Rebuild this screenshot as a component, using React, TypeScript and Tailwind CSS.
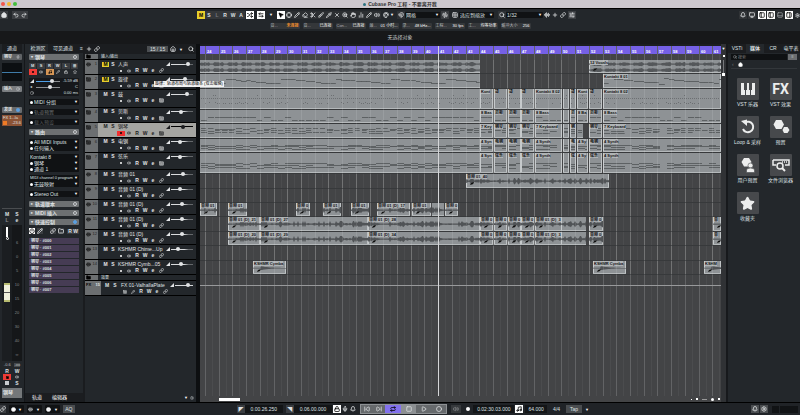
import type { ComponentType, ReactNode } from "react";
import { clsx } from "clsx";
import {
  ArrowLeftRight,
  AudioLines,
  AudioWaveform,
  Bell,
  Brush,
  ChartNoAxesColumn,
  Circle,
  Clock,
  Crosshair,
  Disc,
  Eraser,
  Folder,
  Grid2x2,
  Hand,
  House,
  Keyboard,
  Link,
  Lock,
  Magnet,
  Monitor,
  Mic,
  MousePointer2,
  Music,
  Palette,
  PanelBottom,
  PanelLeft,
  PanelRight,
  Pencil,
  Pipette,
  Play,
  Plus,
  Power,
  Redo2,
  Repeat,
  Scissors,
  Search,
  Settings,
  Shuffle,
  SkipBack,
  SkipForward,
  SlidersHorizontal,
  Square,
  Star,
  Undo2,
  Volume2,
  X,
  ZoomIn,
} from "lucide-react";

type Icon = ComponentType<{ className?: string }>;

const VISIBLE_WIDTH = 521;
const BAR_WIDTH = VISIBLE_WIDTH / 38;
const FIRST_BAR = 24;
const BAR_OFFSET = 5;
const bars = Array.from({ length: 38 }, (_, i) => ({
  number: FIRST_BAR + i,
  left: Math.round(BAR_OFFSET + i * BAR_WIDTH),
}));

type Pattern = "vocal" | "melody" | "drums" | "bass" | "keys" | "synth" | "audio" | "hit";
type Clip = { left: number; width: number; label?: string };
type Track = {
  name: string;
  kind: "audio" | "midi";
  pattern: Pattern;
  volume: number;
  tall?: boolean;
  muted?: boolean;
  selected?: boolean;
  clips: Clip[];
};

// the second half of the song repeats the same cuts on every instrument lane
const cuts = (full: string, short: string, tail: string): Clip[] => [
  { left: 0, width: 280 },
  { left: 280, width: 13, label: full },
  { left: 294, width: 13, label: short },
  { left: 308, width: 13, label: short },
  { left: 321, width: 13, label: short },
  { left: 335, width: 27, label: tail },
  { left: 363, width: 6, label: " " },
  { left: 370, width: 6, label: short.slice(0, 1) },
  { left: 377, width: 11, label: full.slice(0, 4) },
  { left: 389, width: 13, label: short },
  { left: 403, width: 118, label: tail },
];

const guitar = (a: string, b: string, c: string): Clip[] => [
  { left: 28, width: 32, label: a },
  { left: 60, width: 108, label: b },
  { left: 168, width: 112, label: c },
  { left: 280, width: 13, label: "音频 0" },
  { left: 294, width: 13, label: "音频 0" },
  { left: 308, width: 13, label: "音频 0" },
  { left: 321, width: 13, label: "音频 0" },
  { left: 335, width: 27, label: "音频 01 (D)_3" },
  { left: 362, width: 24 },
  { left: 389, width: 14, label: "音频 0" },
  { left: 513, width: 8, label: "音" },
];

const tracks: Track[] = [
  {
    name: "人声",
    kind: "audio",
    pattern: "vocal",
    volume: 82,
    muted: true,
    clips: [
      { left: 0, width: 280 },
      { left: 389, width: 132, label: "12 Vocals" },
    ],
  },
  {
    name: "旋律",
    kind: "midi",
    pattern: "melody",
    volume: 66,
    muted: true,
    clips: [
      { left: 0, width: 280 },
      { left: 403, width: 118, label: "Kontakt 8 01" },
    ],
  },
  {
    name: "鼓",
    kind: "midi",
    pattern: "drums",
    volume: 76,
    tall: true,
    clips: cuts("Kont", "鼓", "Kontakt 8 02"),
  },
  { name: "贝斯", kind: "midi", pattern: "bass", volume: 42, clips: cuts("8 Bas", "贝斯", "8 Bass") },
  {
    name: "钢琴",
    kind: "midi",
    pattern: "keys",
    volume: 58,
    selected: true,
    clips: cuts("7 Key", "钢琴", "7 Keyboard").map((c) => (c.left === 377 ? { left: 377, width: 6 } : c)),
  },
  { name: "电钢", kind: "midi", pattern: "synth", volume: 38, clips: cuts("4 Syn", "电钢", "4 Synth") },
  { name: "弦乐", kind: "midi", pattern: "synth", volume: 38, tall: true, clips: cuts("4 Syn", "弦乐", "4 Synth") },
  {
    name: "音频 01",
    kind: "audio",
    pattern: "audio",
    volume: 56,
    clips: [{ left: 266, width: 143, label: "音频 01_40" }],
  },
  { name: "音频 01 (D)", kind: "audio", pattern: "audio", volume: 38, clips: [] },
  {
    name: "音频 01 (D)",
    kind: "audio",
    pattern: "audio",
    volume: 50,
    clips: [
      { left: 0, width: 17, label: "音频 01" },
      { left: 28, width: 19, label: "音频 01" },
      { left: 96, width: 14, label: "音频 0" },
      { left: 123, width: 18, label: "音频 01" },
      { left: 151, width: 18, label: "音频 01" },
      { left: 177, width: 33, label: "音频 01 (D)_17" },
      { left: 212, width: 19, label: "音频 01" },
      { left: 232, width: 12 },
      { left: 245, width: 13, label: "音频 0" },
    ],
  },
  {
    name: "音频 01 (D)",
    kind: "audio",
    pattern: "audio",
    volume: 52,
    clips: guitar("音频 01 (D)_21", "音频 01 (D)_27", "音频 01 (D)_28"),
  },
  {
    name: "音频 01 (D)",
    kind: "audio",
    pattern: "audio",
    volume: 48,
    clips: guitar("音频 01 (D)_20", "音频 01 (D)_29", "音频 01 (D)_34"),
  },
  { name: "KSHMR Chime...Up", kind: "audio", pattern: "hit", volume: 26, clips: [] },
  {
    name: "KSHMR Cymb...05",
    kind: "audio",
    pattern: "hit",
    volume: 42,
    clips: [
      { left: 53, width: 33, label: "KSHMR Cymba" },
      { left: 393, width: 33, label: "KSHMR Cymba" },
      { left: 504, width: 17, label: "KSHM" },
    ],
  },
];

const tools: [string, Icon][] = [
  ["范围", Crosshair],
  ["铅笔", Pencil],
  ["橡皮", Eraser],
  ["拆分", Scissors],
  ["画笔", Brush],
  ["吸管", Pipette],
  ["静音", X],
  ["缩放", ZoomIn],
  ["抓手", Hand],
  ["比较", ChartNoAxesColumn],
  ["直线", Pencil],
  ["播放", Volume2],
];

const statusItems = [
  { label: "音...", value: "未连接", warn: true },
  { label: "音...", value: "已连接" },
  { label: "Con...", value: "已连接" },
  { label: "最...", value: "01 小时..." },
  { label: "录...", value: "48 kHz..." },
  { label: "工程...", value: "30 fps" },
  { label: "工...", value: "均等功率" },
  { label: "缓冲大小", value: "256" },
];

function noise(seed: number) {
  const v = Math.sin(seed * 127) * 43758;
  return v - Math.floor(v);
}

function wavePath(from: number, width: number, mid: number, amp: number, pattern: Pattern) {
  let top = "";
  let bottom = "";
  for (let x = 0; x <= width; x++) {
    const gx = from + x;
    const n = noise(gx);
    let level = 0.2 + n * 0.4;
    if (pattern === "vocal") level = gx % 14 < 10 ? 0.5 + n * 0.5 : 0.2;
    if (pattern === "audio") level = n > 0.84 ? 1 : 0.12 + noise(Math.floor(gx / 9)) * 0.8 * n;
    if (pattern === "hit") level = x < 8 ? 0.1 : 0.6 * Math.exp(-(x - 8) / 8);
    top += `${x === 0 ? "M" : "L"}${x} ${(mid - level * amp).toFixed(1)}`;
    bottom = `L${x} ${(mid + level * amp + 0.3).toFixed(1)}` + bottom;
  }
  return `${top}${bottom}Z`;
}

function notes(from: number, width: number, height: number, pattern: Pattern) {
  const out: { x: number; y: number; w: number }[] = [];
  const end = width - 1;
  if (pattern === "melody") {
    // phrases of four bars that walk down step by step
    for (let x = 1; x < end; x += 5) {
      const gx = from + x;
      const phrase = ((gx + 32) % 55) / 55;
      out.push({ x, y: Math.round(4 + phrase * 5 + noise(gx)), w: 4 + noise(gx) * 2 });
    }
  } else if (pattern === "drums") {
    for (let x = 1; x < end; x += 2) {
      out.push({ x, y: 9, w: 1 });
      if (noise(from + x) > 0.5) out.push({ x, y: 14 - (x % 3 === 0 ? 1 : 0), w: 1 });
      if (noise(from + x + 9) > 0.93) out.push({ x, y: 6, w: 1 });
    }
  } else if (pattern === "bass") {
    for (let x = 1; x < end; x += 7) {
      const n = noise(from + x);
      out.push({ x, y: n > 0.5 ? 7 : 10, w: Math.min(5 + n * 2, end - x) });
    }
  } else {
    const rows = pattern === "keys" ? [4, 6, 8] : height > 16 ? [10, 12, 14] : [6, 7, 9];
    rows.forEach((row, r) => {
      for (let x = 1; x < end; x += 7) {
        const n = noise(from + x + r * 31);
        if (n < 0.16) continue;
        out.push({ x, y: row + (n > 0.7 ? 1 : 0), w: Math.min(pattern === "keys" ? 4 + n * 3 : 7, end - x) });
      }
    });
  }
  return out;
}

function ClipContent({ clip, track }: { clip: Clip; track: Track }) {
  const height = track.tall ? 20 : 13;
  const isWave = track.kind === "audio";
  return (
    <svg className="absolute inset-0 h-full w-full" aria-hidden="true">
      {isWave && track.pattern === "vocal" && (
        <g fill="#54575a">
          <path d={wavePath(clip.left, clip.width, 4, 2, "vocal")} />
          <path d={wavePath(clip.left, clip.width, 10, 2, "vocal")} />
        </g>
      )}
      {isWave && track.pattern !== "vocal" && (
        <path d={wavePath(clip.left, clip.width, 7, 3, track.pattern)} fill="#505356" />
      )}
      {!isWave &&
        notes(clip.left, clip.width, height, track.pattern).map((n, i) => (
          <rect key={i} x={n.x} y={n.y} width={n.w} height="1" fill="#55585b" opacity={track.pattern === "drums" ? 0.6 : 0.85} />
        ))}
      {isWave && clip.label && <path d="M4 11l1-2 3-1-1 2z" fill="#111" />}
    </svg>
  );
}

function Lane({ track }: { track: Track }) {
  return (
    <div className={clsx("relative basis-0 border-b border-[#37393b]", track.tall ? "grow-3" : "grow-2")}>
      {track.clips.map((clip) => (
        <div
          key={clip.left}
          className="absolute top-0 bottom-0 overflow-hidden border-b border-[#b4b8ba] bg-[#8e9295]"
          style={{ left: clip.left, width: clip.width }}
        >
          {clip.label && <div className="absolute inset-y-0 left-0 w-px bg-[#c6cacc]" />}
          {clip.label && <div className="absolute inset-y-0 right-0 w-px bg-[#bfc3c5]" />}
          <ClipContent clip={clip} track={track} />
          {clip.label && (
            <span className="absolute top-0 left-px bg-[#b0b4b6] text-[4px] leading-[5px] font-bold whitespace-nowrap text-[#101113]">
              {clip.label}
            </span>
          )}
        </div>
      ))}
    </div>
  );
}

function IconButton({
  label,
  icon: IconComponent,
  className,
  iconClass = "size-[6px]",
}: {
  label: string;
  icon: Icon;
  className?: string;
  iconClass?: string;
}) {
  return (
    <button
      type="button"
      aria-label={label}
      className={clsx("flex shrink-0 items-center justify-center", className ?? "h-[8px] w-[8px]")}
    >
      <IconComponent className={clsx("stroke-3", iconClass)} />
    </button>
  );
}

function Caret() {
  return <span className="text-[4px] leading-none text-white">▼</span>;
}

function Dropdown({
  label,
  value,
  className,
  icon,
}: {
  label: string;
  value: string;
  className?: string;
  icon?: ReactNode;
}) {
  return (
    <label className={clsx("flex h-[6px] min-w-0 items-center gap-px rounded-[1px] bg-[#101214] px-px", className)}>
      {icon}
      <select aria-label={label} className="h-full min-w-0 flex-1 appearance-none overflow-hidden bg-transparent leading-none">
        <option>{value}</option>
      </select>
      <Caret />
    </label>
  );
}

function Slider({ label, value, className }: { label: string; value: number; className?: string }) {
  return (
    <input
      type="range"
      aria-label={label}
      defaultValue={value}
      className={clsx(
        "h-[4px] min-w-0 appearance-none bg-transparent bg-linear-to-r bg-[length:100%_1px] bg-center bg-no-repeat",
        "[&::-webkit-slider-thumb]:size-[4px] [&::-webkit-slider-thumb]:appearance-none [&::-webkit-slider-thumb]:rounded-full [&::-webkit-slider-thumb]:bg-current",
        className,
      )}
    />
  );
}

function VolumeMark() {
  return (
    <svg viewBox="0 0 4 4" className="size-[4px] shrink-0 fill-current" aria-hidden="true">
      <path d="M0 4L4 0V4Z" />
    </svg>
  );
}

function TitleBar() {
  return (
    <header className="flex h-[9px] shrink-0 items-center border-b border-black bg-[#cdc8ce] px-px">
      <div className="flex flex-1 gap-[2px]">
        <span className="size-[4px] rounded-full bg-[#f3564d]" />
        <span className="size-[4px] rounded-full bg-[#f5b62e]" />
        <span className="size-[4px] rounded-full bg-[#43bf3d]" />
      </div>
      <h1 className="flex items-center gap-[2px] text-[5px] font-bold text-[#333]">
        <span className="size-[3px] rounded-full bg-[#2c7480]" />
        Cubase Pro 工程 - 不要离开我
      </h1>
      <div className="flex-1" />
    </header>
  );
}

function Toolbar() {
  return (
    <div className="flex h-[12px] shrink-0 items-center">
      <div className="flex grow-197 basis-0 items-center gap-[4px]">
        <IconButton label="主页" icon={House} className="h-[8px] w-[8px] bg-[#3a3d41]" iconClass="size-[6px] fill-current" />
        <div className="flex">
          <IconButton label="撤销" icon={Undo2} className="h-[8px] w-[8px] bg-[#3a3d41]" />
          <IconButton label="重做" icon={Redo2} className="h-[8px] w-[8px] bg-[#3a3d41]" />
        </div>
      </div>
      <div className="flex w-[379px] shrink-0 items-center">
        {["M", "S", "L", "R", "W", "A"].map((key) => (
          <button
            key={key}
            type="button"
            className={clsx(
              "h-[8px] w-[8px] text-[5px] font-bold",
              key === "M" && "bg-[#e8cf2c] text-black",
              key === "L" && "bg-[#34373a] text-[#73767a]",
              key !== "M" && key !== "L" && "bg-[#34373a]",
            )}
          >
            {key}
          </button>
        ))}
        <IconButton label="自动滚动" icon={Shuffle} className="ml-px h-[8px] w-[8px] bg-white text-black" />
        <IconButton label="延迟补偿" icon={ArrowLeftRight} className="ml-[3px] h-[8px] w-[8px] bg-white text-black" />
        <div className="flex w-[12px] items-center justify-around"><Caret /></div>
        <IconButton label="选择" icon={MousePointer2} className="h-[8px] w-[8px] bg-white text-black" iconClass="size-[6px] fill-black" />
        <div className="flex bg-[#2c2f32]">
          {tools.map(([label, icon]) => (
            <IconButton key={label} label={label} icon={icon} />
          ))}
        </div>
        <IconButton label="颜色" icon={Palette} className="ml-px h-[8px] w-[8px]" />
        <Caret />
        <IconButton label="吸附" icon={Magnet} className="ml-[3px] h-[8px] w-[8px] bg-[#2f3236]" />
        <Dropdown label="吸附类型" value="网格" className="w-[35px] text-[5px]" />
        <IconButton label="零交叉" icon={AudioWaveform} className="ml-px h-[8px] w-[8px] bg-[#3a3d41]" />
        <IconButton label="网格类型" icon={Grid2x2} className="ml-[2px] h-[8px] w-[8px]" />
        <Dropdown label="网格缩放" value="适应到缩放" className="w-[35px] text-[5px]" />
        <IconButton label="量化" icon={Search} className="ml-[4px] h-[8px] w-[8px] bg-[#2f3236]" />
        <Dropdown label="量化预置" value="1/32" className="w-[37px] text-[5px]" />
        <IconButton label="应用量化" icon={AudioLines} />
        <IconButton label="设置" icon={Plus} />
        <IconButton label="同步" icon={Link} />
        <IconButton label="对齐" icon={SlidersHorizontal} className="ml-px h-[8px] w-[8px] bg-[#3a3d41]" />
      </div>
      <div className="flex grow-224 basis-0 items-center justify-end gap-px">
        <IconButton label="导出" icon={Bell} className="h-[8px] w-[8px] bg-[#303336]" />
        <IconButton label="窗口" icon={Monitor} className="h-[8px] w-[8px] bg-[#303336]" />
        <IconButton label="左侧区域" icon={PanelLeft} className="ml-px h-[8px] w-[8px] bg-white text-black" />
        <IconButton label="信息" icon={PanelLeft} className="h-[8px] w-[8px] bg-white text-black" />
        <IconButton label="下方区域" icon={PanelBottom} className="h-[8px] w-[8px] text-[#9a9da0]" />
        <IconButton label="右侧区域" icon={PanelRight} className="h-[8px] w-[8px] bg-white text-black" />
        <IconButton label="布局设置" icon={Settings} className="h-[8px] w-[6px]" iconClass="size-[5px]" />
      </div>
    </div>
  );
}

function StatusLine() {
  return (
    <div className="flex h-[10px] shrink-0 items-center justify-center gap-[3px]">
      {statusItems.map((item, i) => (
        <div key={i} className="flex h-[6px] w-[30px] items-center justify-between rounded-[1px] bg-[#34373a] px-px text-[4px] leading-[6px] whitespace-nowrap">
          <span className="text-[#b0b3b6]">{item.label}</span>
          <span className={item.warn ? "font-bold text-[#ef8b2b]" : "text-white"}>{item.value}</span>
        </div>
      ))}
    </div>
  );
}

function ChannelStrip() {
  return (
    <aside className="flex w-[25px] shrink-0 flex-col border-r border-[#15171a] px-[2px] text-[4px]">
      <h2 className="flex h-[9px] shrink-0 items-center justify-center bg-[#1b1d20] text-[5px]">通道</h2>
      <div className="mt-px flex h-[6px] shrink-0 items-center justify-between rounded-[1px] bg-[#606366] px-[2px] font-bold">
        钢琴 <Mic className="size-[4px]" />
      </div>
      <div className="mt-[3px] flex h-[18px] shrink-0 items-center bg-[#0c0f12]">
        <div className="h-px w-full bg-[#3f7ba8]" />
      </div>
      <button type="button" className="mt-[5px] flex h-[6px] shrink-0 items-center justify-between rounded-[1px] bg-[#7a7d80] px-[2px] font-bold">
        插入 <Disc className="size-[4px]" />
      </button>
      <button type="button" className="mt-[15px] flex h-[6px] shrink-0 items-center justify-between rounded-[1px] bg-[#686b6e] px-[2px] font-bold">
        发送 <span className="size-[4px] rounded-full bg-[#5b9fdf]" />
      </button>
      <div className="mt-[2px] flex h-[11px] shrink-0 flex-col justify-around bg-[#8c5335] px-px">
        <span>FX 1...la</span>
        <span className="flex items-center justify-between">
          <span className="size-[4px] bg-[#ee7b25]" /> -23.6
        </span>
      </div>
      <div className="mt-auto h-px shrink-0 bg-[#4a4d50]" />
      <div className="grid grid-cols-2 py-[2px] text-center text-[5px] leading-[6px] font-bold">
        <span>M</span>
        <span>S</span>
        <span className="text-[#85888b]">L</span>
        <span>e</span>
      </div>
      <div className="flex h-[136px] shrink-0 bg-[#151719]">
        <div className="flex w-1/2 flex-col items-center bg-[#1b1e21] pt-[2px]">
          <div className="h-[10px] w-[2px] bg-white" />
          <div className="size-[3px] rounded-full border border-white" />
          <div className="mt-[43px] h-[19px] w-[6px] border-y-2 border-[#b6bb70] bg-[#f0f0dc]">
            <div className="mt-[7px] h-px bg-[#555]" />
          </div>
        </div>
        <div className="flex w-1/2 flex-col items-center justify-between pt-[16px] pb-[4px] text-[#84878a]">
          {["6", "0", "5", "10", "15", "20", "30", "40", "∞"].map((mark) => (
            <span key={mark}>{mark}</span>
          ))}
        </div>
      </div>
      <div className="mt-px flex h-[5px] items-center justify-around text-[#b9bcbf]">
        <span>-0.6</span>
        <span className="bg-[#46494c]">-oo</span>
      </div>
      <div className="mt-[2px] grid grid-cols-2 items-center justify-items-center text-[5px] font-bold">
        <span>R</span>
        <span>W</span>
        <IconButton label="通道录音" icon={Square} className="h-[6px] w-[8px] bg-[#ee3a35] text-black" iconClass="size-[3px] fill-black" />
        <IconButton label="通道监听" icon={Volume2} className="h-[6px] w-[8px]" iconClass="size-[4px]" />
        <span className="my-px size-[4px] bg-[#c9cccf]" />
        <span>S</span>
      </div>
      <div className="mt-[2px] mb-[4px] h-[10px] shrink-0 bg-[#747779] px-px pt-[2px] text-[5px] font-bold">钢琴</div>
    </aside>
  );
}

function SectionHeader({ title, open, on }: { title: string; open?: boolean; on?: boolean }) {
  return (
    <button type="button" className="flex h-[6px] w-full shrink-0 items-center gap-[2px] rounded-[1px] bg-[#6d7072] px-[2px] text-[5px] font-bold">
      <span className="text-[4px]">{open ? "▾" : "▸"}</span>
      {title}
      <span className={clsx("ml-auto size-[4px] rounded-full border", on ? "border-[#5b9fdf] bg-[#5b9fdf]" : "border-[#c9cccf]")} />
    </button>
  );
}

function Inspector() {
  const dot = <span className="size-[3px] shrink-0 rounded-full bg-white" />;
  return (
    <aside className="flex w-[60px] shrink-0 flex-col border-r-2 border-[#1a1c1f] text-[5px]">
      <div className="flex h-[9px] shrink-0 items-center bg-[#1b1d20]">
        <button type="button" className="h-full w-[23px] bg-[#24282c] pl-[3px]">检测区</button>
        <button type="button" className="pl-[5px] whitespace-nowrap">可见通道</button>
        <span className="ml-auto">≡</span>
      </div>
      <div className="flex flex-col gap-[3px] px-[4px] pt-px">
        <SectionHeader title="钢琴" open />
        <div className="grid grid-cols-6 text-[4px] font-bold">
          {["M", "S", "R", "W", "L", "⊞"].map((key) => (
            <button key={key} type="button" className="h-[6px] border-r border-[#23272b] bg-[#393c40]">{key}</button>
          ))}
          <button type="button" aria-label="录音准备" className="flex h-[6px] items-center justify-center bg-[#f03c38]">
            <span className="size-[2px] rounded-full bg-black" />
          </button>
          <IconButton label="监听" icon={Volume2} className="h-[6px]" iconClass="size-[4px]" />
          <IconButton label="时基" icon={Music} className="h-[6px] bg-[#d59656] text-black" iconClass="size-[4px]" />
          <IconButton label="编辑乐器" icon={Pencil} className="h-[6px]" iconClass="size-[4px]" />
          <IconButton label="锁定" icon={Lock} className="h-[6px]" iconClass="size-[4px]" />
          <IconButton label="冻结" icon={Star} className="h-[6px]" iconClass="size-[4px]" />
        </div>
        <div className="rounded-[1px] bg-[#16181b] text-[4px]">
          <div className="flex h-[6px] items-center gap-[2px] px-px">
            <VolumeMark />
            <Slider label="音量" value={70} className="w-[24px] from-[#4d9fe8] from-70% to-[#8b8e91] to-70%" />
            <span className="ml-auto whitespace-nowrap">-5.59 dB</span>
          </div>
          <div className="flex h-[6px] items-center gap-[2px] px-px">
            <span className="w-[4px]">◂</span>
            <Slider label="声像" value={58} className="w-[24px] from-[#8b8e91] to-[#8b8e91]" />
            <span className="ml-auto">C</span>
          </div>
          <div className="flex h-[6px] items-center px-px">
            <Clock className="size-[4px]" />
            <span className="ml-auto">0.00 ms</span>
          </div>
        </div>
        <div className="flex flex-col gap-[4px]">
          <Dropdown label="分组" value="MIDI 分组" icon={dot} />
          <Dropdown label="轨道预置" value="轨道预置" className="text-[#6f7275]" icon={dot} />
          <Dropdown label="载入预设" value="载入预设" className="text-[#55585b]" icon={dot} />
        </div>
        <div className="py-px">
          <SectionHeader title="路由" open />
        </div>
        <div>
          <Dropdown label="MIDI 输入" value="All MIDI Inputs" icon={dot} />
          <Dropdown label="输入通道" value="任何输入" icon={dot} />
        </div>
        <div>
          <Dropdown label="乐器" value="Kontakt 8" />
          <Dropdown label="输出" value="钢琴" icon={dot} />
          <Dropdown label="通道" value="通道 1" icon={dot} />
        </div>
        <div>
          <Dropdown label="音色" value="MIDI channel 0 program 0" className="text-[4px]" />
          <Dropdown label="鼓映射" value="无鼓映射" icon={dot} />
        </div>
        <Dropdown label="音频输出" value="Stereo Out" className="my-px" icon={dot} />
        <div className="flex flex-col gap-[3px]">
          <SectionHeader title="轨道版本" />
          <SectionHeader title="MIDI 插入" />
          <SectionHeader title="快速控制" open on />
        </div>
        <div className="flex h-[6px] items-center gap-[2px]">
          <IconButton label="控制器设置" icon={Power} className="h-[6px] w-[6px] bg-white text-black" />
          <IconButton label="学习" icon={Pencil} className="h-[6px] w-[6px] bg-[#3a3d41]" />
          <IconButton label="连接" icon={Link} className="ml-[5px] h-[6px] w-[6px] bg-[#3a3d41]" />
          <IconButton label="保存" icon={Folder} className="h-[6px] w-[6px] bg-[#3a3d41]" />
          <span className="ml-auto bg-[#3a3d41] px-px font-bold">R W</span>
        </div>
        <div className="mt-px flex flex-col gap-px">
          {["#000", "#001", "#002", "#003", "#004", "#005", "#006", "#007"].map((slot) => (
            <div key={slot} className="flex h-[6px] items-center bg-[#463c54] px-[2px] text-[4px] font-bold">
              钢琴 · {slot}
            </div>
          ))}
        </div>
      </div>
      <div className="mt-auto flex h-[9px] shrink-0 items-center gap-[10px] bg-[#1b1d20] pl-[7px] text-white">
        <button type="button">轨道</button>
        <button type="button">编辑器</button>
      </div>
    </aside>
  );
}

function TrackRow({ track, number }: { track: Track; number: number }) {
  const KindIcon = track.kind === "audio" ? AudioLines : Keyboard;
  return (
    <li className={clsx("flex basis-0 border-b border-black", track.tall ? "grow-3" : "grow-2")}>
      <div className="flex w-[13px] shrink-0 justify-between bg-[#6c6f71] px-px pt-[2px] text-[4px] text-[#222]">
        <KindIcon className="size-[5px] stroke-3 text-black" />
        {number}
      </div>
      <div className={clsx("flex-1 pt-px pr-[3px] pl-[4px]", track.selected ? "bg-[#a5a5a1] text-[#1c1d1f]" : "text-[#e3e5e7]")}>
        <div className="flex h-[6px] items-center text-[5px] font-bold">
          <button type="button" className={clsx("h-[5px] w-[7px] leading-[5px]", track.muted && "bg-[#e8cf2c] text-black")}>M</button>
          <button type="button" className="h-[5px] w-[8px] leading-[5px]">S</button>
          <span className="ml-px flex-1 font-normal whitespace-nowrap">{track.name}</span>
          <VolumeMark />
          <Slider
            label={`${track.name} 音量`}
            value={track.volume}
            className={clsx("ml-px w-[22px]", track.selected ? "from-black to-black" : "from-[#d9dbdd] from-60% to-[#65686b] to-80%")}
          />
        </div>
        <div className="flex h-[7px] items-center pl-[15px] text-[5px] font-bold">
          <button
            type="button"
            aria-label={`${track.name} 录音`}
            className={clsx("flex h-[5px] w-[8px] items-center justify-center", track.selected && "bg-[#f03030]")}
          >
            <span className={clsx("size-[2px] rounded-full", track.selected ? "bg-black" : "bg-white")} />
          </button>
          <IconButton label={`${track.name} 监听`} icon={Volume2} className="h-[5px] w-[8px]" iconClass="size-[4px]" />
          <button type="button" className="w-[8px]">R</button>
          <button type="button" className="w-[8px]">W</button>
          <button type="button" className="w-[8px]">e</button>
          <IconButton label={`${track.name} 编辑`} icon={track.kind === "audio" ? Link : Keyboard} className="h-[5px] w-[8px]" iconClass="size-[5px]" />
        </div>
      </div>
    </li>
  );
}

function FolderRow({ name }: { name: string }) {
  return (
    <div className="flex h-[6px] shrink-0 items-center border-b border-black text-[4px]">
      <div className="flex h-full w-[13px] items-center bg-[#6c6f71] pl-px">
        <Folder className="size-[5px] fill-black text-black" />
      </div>
      <span className="pl-[3px]">{name}</span>
    </div>
  );
}

function TrackList() {
  return (
    <section aria-label="轨道列表" className="relative z-10 flex w-[115px] shrink-0 flex-col border-r-4 border-[#0d0f11]">
      <div className="flex h-[10px] shrink-0 items-center bg-[#1b1d20] pr-px">
        <IconButton label="添加轨道" icon={Plus} />
        <IconButton label="使用预置" icon={Link} />
        <span className="ml-auto w-[21px] bg-[#4b4e51] text-center text-[5px] leading-[6px]">15 / 15</span>
        <IconButton label="可见性" icon={House} className="ml-px h-[8px] w-[8px]" />
        <span className="mx-[2px]"><Caret /></span>
        <IconButton label="查找轨道" icon={Search} className="ml-[2px] h-[8px] w-[8px]" />
      </div>
      <FolderRow name="输入/输出" />
      <ol className="flex h-[215px] shrink-0 flex-col">
        {tracks.map((track, i) => (
          <TrackRow key={i} track={track} number={i + 1} />
        ))}
      </ol>
      <FolderRow name="效果" />
      <div className="flex h-[15px] shrink-0 border-b border-black">
        <div className="flex w-[16px] justify-between bg-[#6c6f71] px-px pt-[2px] text-[4px] font-bold">
          <span className="text-black">FX</span>
          <span>15</span>
        </div>
        <div className="flex-1 pt-px pl-[2px]">
          <div className="flex h-[6px] items-center pr-[3px] text-[5px] font-bold">
            <button type="button" className="w-[8px]">M</button>
            <button type="button" className="w-[8px]">S</button>
            <span className="flex-1 pl-[2px] font-normal whitespace-nowrap">FX 01-ValhallaPlate</span>
            <VolumeMark />
            <Slider label="FX 音量" value={82} className="ml-px w-[18px] from-[#d9dbdd] to-[#d9dbdd]" />
          </div>
          <div className="flex h-[7px] items-center pl-[18px] text-[5px] font-bold">
            <IconButton label="FX 编辑" icon={Keyboard} className="h-[5px] w-[8px]" iconClass="size-[4px]" />
            <IconButton label="FX 设置" icon={Pencil} className="h-[5px] w-[8px]" iconClass="size-[4px]" />
            <button type="button" className="w-[8px]">R</button>
            <button type="button" className="w-[8px]">W</button>
            <button type="button" className="w-[8px]">e</button>
            <IconButton label="FX 声道" icon={Link} className="h-[5px] w-[8px]" iconClass="size-[5px]" />
          </div>
        </div>
      </div>
      <div className="mt-auto flex h-[8px] items-center justify-end gap-[2px] pr-[2px]">
        <Caret />
        <Settings className="size-[4px]" />
      </div>
      <div role="tooltip" className="absolute top-[37px] left-[69px] h-[6px] bg-[#f2f2f2] px-px text-[4px] leading-[6px] whitespace-nowrap text-black">
        旋律：轨道布局与轨道版本 (双击编辑)
      </div>
    </section>
  );
}

function Arrangement() {
  return (
    <main className="relative flex min-w-0 flex-1 flex-col overflow-hidden bg-[#434446]">
      <div className="h-[2px] shrink-0 bg-[#1b1d20]" />
      <div className="h-[8px] shrink-0 bg-[#7560e6]" />
      <div className="pointer-events-none absolute inset-x-0 top-[2px] bottom-0">
        {bars.map((bar) => (
          <div key={bar.number} className="absolute inset-y-0 border-l border-[#626365]" style={{ left: bar.left }}>
            <span className="block h-[8px] pl-px text-[4px] leading-[11px] font-bold text-white">{bar.number}</span>
          </div>
        ))}
        {bars.map((bar) => (
          <div
            key={bar.number}
            className="absolute top-[8px] bottom-0 w-px bg-[#4b4c4e]"
            style={{ left: bar.left + 7 }}
          />
        ))}
      </div>
      <div className="h-[6px] shrink-0" />
      <div className="relative flex h-[215px] shrink-0 flex-col">
        {tracks.map((track, i) => (
          <Lane key={i} track={track} />
        ))}
        {/* bar lines show faintly through the clips */}
        <div className="pointer-events-none absolute inset-0">
          {bars.map((bar) => (
            <div key={bar.number} className="absolute inset-y-0 w-px bg-white/10" style={{ left: bar.left }} />
          ))}
        </div>
      </div>
      <div className="relative mt-[10px] h-px shrink-0 bg-[#98999b]" />
      <div className="relative mt-auto flex h-[6px] shrink-0 items-center bg-[#434446] pl-[19px]">
        <div className="h-[3px] w-[21px] bg-white" />
        <div className="ml-auto flex items-center gap-[4px] pr-px">
          <span className="size-px bg-white" />
          <span className="size-[2px] bg-white" />
          <span className="h-px w-[5px] bg-[#999]" />
          <span className="size-[3px] rounded-full bg-white" />
          <span className="size-[2px] bg-white" />
        </div>
      </div>
      <div className="absolute top-[2px] bottom-[6px] left-[238px] w-px bg-[#d5d6d8]" />
    </main>
  );
}

function MediaTile({ label, children }: { label: string; children: ReactNode }) {
  return (
    <button type="button" className="flex w-[33px] flex-col items-center">
      <span className="flex size-[22px] items-center justify-center rounded-[1px] bg-[#47494c] text-[#eceded]">{children}</span>
      <span className="mt-px text-[5px] leading-[7px] whitespace-nowrap">{label}</span>
    </button>
  );
}

function MediaRack() {
  return (
    <aside className="flex w-[74px] shrink-0 flex-col border-l-2 border-[#17191c]">
      <nav className="grid h-[9px] shrink-0 grid-cols-4 items-center bg-[#1b1d20] text-[5px]">
        <button type="button">VSTi</button>
        <button type="button" className="h-full bg-[#24282c] font-bold">媒体</button>
        <button type="button">CR</button>
        <button type="button">电平表</button>
      </nav>
      <div className="mx-[3px] mt-px flex h-[6px] shrink-0 items-center gap-px">
        <label className="flex h-full min-w-0 flex-1 items-center gap-px bg-[#0f1113] px-[2px]">
          <Search className="size-[4px] shrink-0" />
          <input aria-label="搜索媒体" placeholder="搜索" className="h-[6px] w-full min-w-0 bg-transparent text-[4px] placeholder:text-[#777]" />
        </label>
        <button type="button" aria-label="搜索选项" className="h-[6px] w-[9px] bg-[#6a6d70] text-[4px]">≡</button>
      </div>
      <div className="mx-[3px] flex h-[9px] shrink-0 items-center gap-[4px] border-b border-[#33373b] pl-px">
        <span className="text-[5px] text-[#777]">‹</span>
        <House className="size-[5px] fill-white" />
      </div>
      <div className="mt-[9px] grid grid-cols-[33px_33px] gap-y-[8px] pl-[3px]">
        <MediaTile label="VST 乐器">
          <svg viewBox="0 0 22 22" className="size-full fill-current" aria-hidden="true">
            <path d="M4 5H7V12H8V17H4ZM10 12V5H12V12H13V17H9V12ZM15 5H18V17H14V12H15Z" />
          </svg>
        </MediaTile>
        <MediaTile label="VST 效果">
          <span className="font-['Roboto',sans-serif] text-[14px] leading-none font-bold">FX</span>
        </MediaTile>
        <MediaTile label="Loop & 采样">
          <svg viewBox="0 0 22 22" className="size-full" fill="none" stroke="currentColor" strokeWidth="2" aria-hidden="true">
            <path d="M8 6.5A5.3 5.3 0 1 1 6 13" />
            <path d="M4 5L10 3.500V10Z" fill="currentColor" stroke="none" />
          </svg>
        </MediaTile>
        <MediaTile label="预置">
          <svg viewBox="0 0 22 22" className="size-full fill-current" aria-hidden="true">
            <path d="M6 4H11.5L14 8.5L11.5 13H6L3.5 8.5ZM14 11H17.5L19.5 14L17.5 17H14L12.5 14Z" />
          </svg>
        </MediaTile>
        <MediaTile label="用户预置">
          <svg viewBox="0 0 22 22" className="size-full fill-current" aria-hidden="true">
            <path d="M7 4H12L14.5 8L12 12.5H7L4.5 8Z" />
            <g stroke="#47494c" strokeWidth="0.6">
              <circle cx="13.5" cy="11.5" r="2.5" />
              <path d="M9.5 18.5V16Q10 14 13.5 14T17.5 16V18.5Z" />
            </g>
          </svg>
        </MediaTile>
        <MediaTile label="文件浏览器">
          <svg viewBox="0 0 22 22" className="size-full" fill="none" stroke="currentColor" aria-hidden="true">
            <path d="M3 6H19V11H15M3 6V11H6M12 8H13M14 8H15M16 8H17" strokeWidth="1.5" />
            <circle cx="10" cy="12" r="3" strokeWidth="1.5" />
            <path d="M12 14L15 17" strokeWidth="2" />
          </svg>
        </MediaTile>
        <MediaTile label="收藏夹">
          <Star className="size-[15px] fill-current" />
        </MediaTile>
      </div>
    </aside>
  );
}

function Transport() {
  return (
    <footer className="flex h-[13px] shrink-0 items-center border-t border-black bg-[#202327] text-[5px]">
      <div className="flex grow-238 basis-0 items-center gap-[3px]">
        <IconButton label="连接状态" icon={Link} className="h-[8px] w-[6px] bg-[#3a3d41]" />
        {[Circle, AudioLines, Disc].map((icon, i) => (
          <span key={i} className="flex h-[8px] items-center rounded-[1px] bg-[#101214] pr-[2px]">
            <IconButton label={["录音模式", "音频录音模式", "MIDI 录音模式"][i]} icon={icon} iconClass="size-[5px] fill-white" />
            <span className="pl-px"><Caret /></span>
          </span>
        ))}
        <button type="button" className="h-[8px] w-[12px] bg-[#4a4d50]">AQ</button>
      </div>
      <div className="flex w-[352px] shrink-0 items-center">
        <button type="button" aria-label="左定位" className="h-[8px] w-[8px] bg-[#3a3d41]">◤</button>
        <span className="h-[8px] w-[38px] bg-[#131517] text-center leading-[8px]">0.00.26.250</span>
        <button type="button" aria-label="右定位" className="ml-[3px] h-[8px] w-[8px] bg-[#3a3d41]">◥</button>
        <span className="h-[8px] w-[39px] bg-[#131517] text-center leading-[8px]">0.06.00.000</span>
        <IconButton label="锁定定位" icon={Lock} className="ml-px h-[8px] w-[8px] bg-white text-black" />
        <IconButton label="切入" icon={Mic} />
        <IconButton label="切出" icon={Bell} />
        <div className="ml-[3px] flex h-[10px] items-center border border-[#8e9194] bg-[#66696c]">
          <IconButton label="上一标记" icon={SkipBack} className="h-[8px] w-[12px]" />
          <IconButton label="下一标记" icon={SkipForward} className="h-[8px] w-[12px]" />
          <IconButton label="循环" icon={Repeat} className="h-[8px] w-[16px] bg-[#8271ee] text-black" />
          <IconButton label="停止" icon={Square} className="h-[8px] w-[15px] bg-[#8c8f92]" />
          <IconButton label="播放" icon={Play} className="h-[8px] w-[15px]" />
          <IconButton label="录音" icon={Circle} className="h-[8px] w-[15px]" />
        </div>
        <IconButton label="同步" icon={Volume2} className="ml-[4px] h-[8px] w-[10px] bg-[#36393c] text-[#85888b]" />
        <span className="ml-[5px] size-[4px] rounded-full bg-white" />
        <span className="ml-[3px] h-[8px] w-[41px] bg-[#131517] text-center leading-[8px] whitespace-nowrap">0.02:30.03.000</span>
        <IconButton label="速度轨" icon={Music} className="ml-px h-[8px] w-[8px] bg-white text-black" />
        <span className="ml-[2px] h-[8px] w-[22px] bg-[#131517] text-center leading-[8px]">64.000</span>
        <span className="w-[19px] text-center">4/4</span>
        <button type="button" className="h-[8px] w-[16px] bg-[#4a4d50]">Tap</button>
        <span className="ml-[3px]"><Caret /></span>
      </div>
      <div className="flex grow-210 basis-0 items-center justify-end gap-px pr-[2px]">
        <IconButton label="节拍器" icon={Bell} className="h-[8px] w-[8px] bg-[#4a4d50]" />
        <IconButton label="节拍器设置" icon={Settings} className="h-[8px] w-[8px] bg-[#4a4d50]" />
        <div className="ml-[3px] h-[7px] w-[7px] bg-[#111315]" />
        <div className="h-[7px] w-[18px] bg-[#111315]" />
      </div>
    </footer>
  );
}

export default function App() {
  return (
    <div className="flex h-screen flex-col overflow-hidden bg-[#23272b] font-['Liberation_Sans','Noto_Sans_CJK_SC',sans-serif] text-[5px] leading-none text-[#dfe1e3]">
      <TitleBar />
      <Toolbar />
      <StatusLine />
      <div className="flex h-[13px] shrink-0 items-center justify-center bg-[#17181a] text-[5px] text-[#c3c5c7]">无选择对象</div>
      <div className="flex min-h-0 flex-1">
        <ChannelStrip />
        <Inspector />
        <TrackList />
        <Arrangement />
        <div className="flex w-[5px] shrink-0 flex-col items-center bg-[#303235] pt-[3px]">
          <Caret />
          <span className="mt-[4px] h-[2px] w-[2px] bg-white" />
          <span className="mt-[3px] h-[13px] w-px bg-[#77797c]" />
          <span className="size-[3px] bg-white" />
        </div>
        <MediaRack />
      </div>
      <Transport />
    </div>
  );
}
